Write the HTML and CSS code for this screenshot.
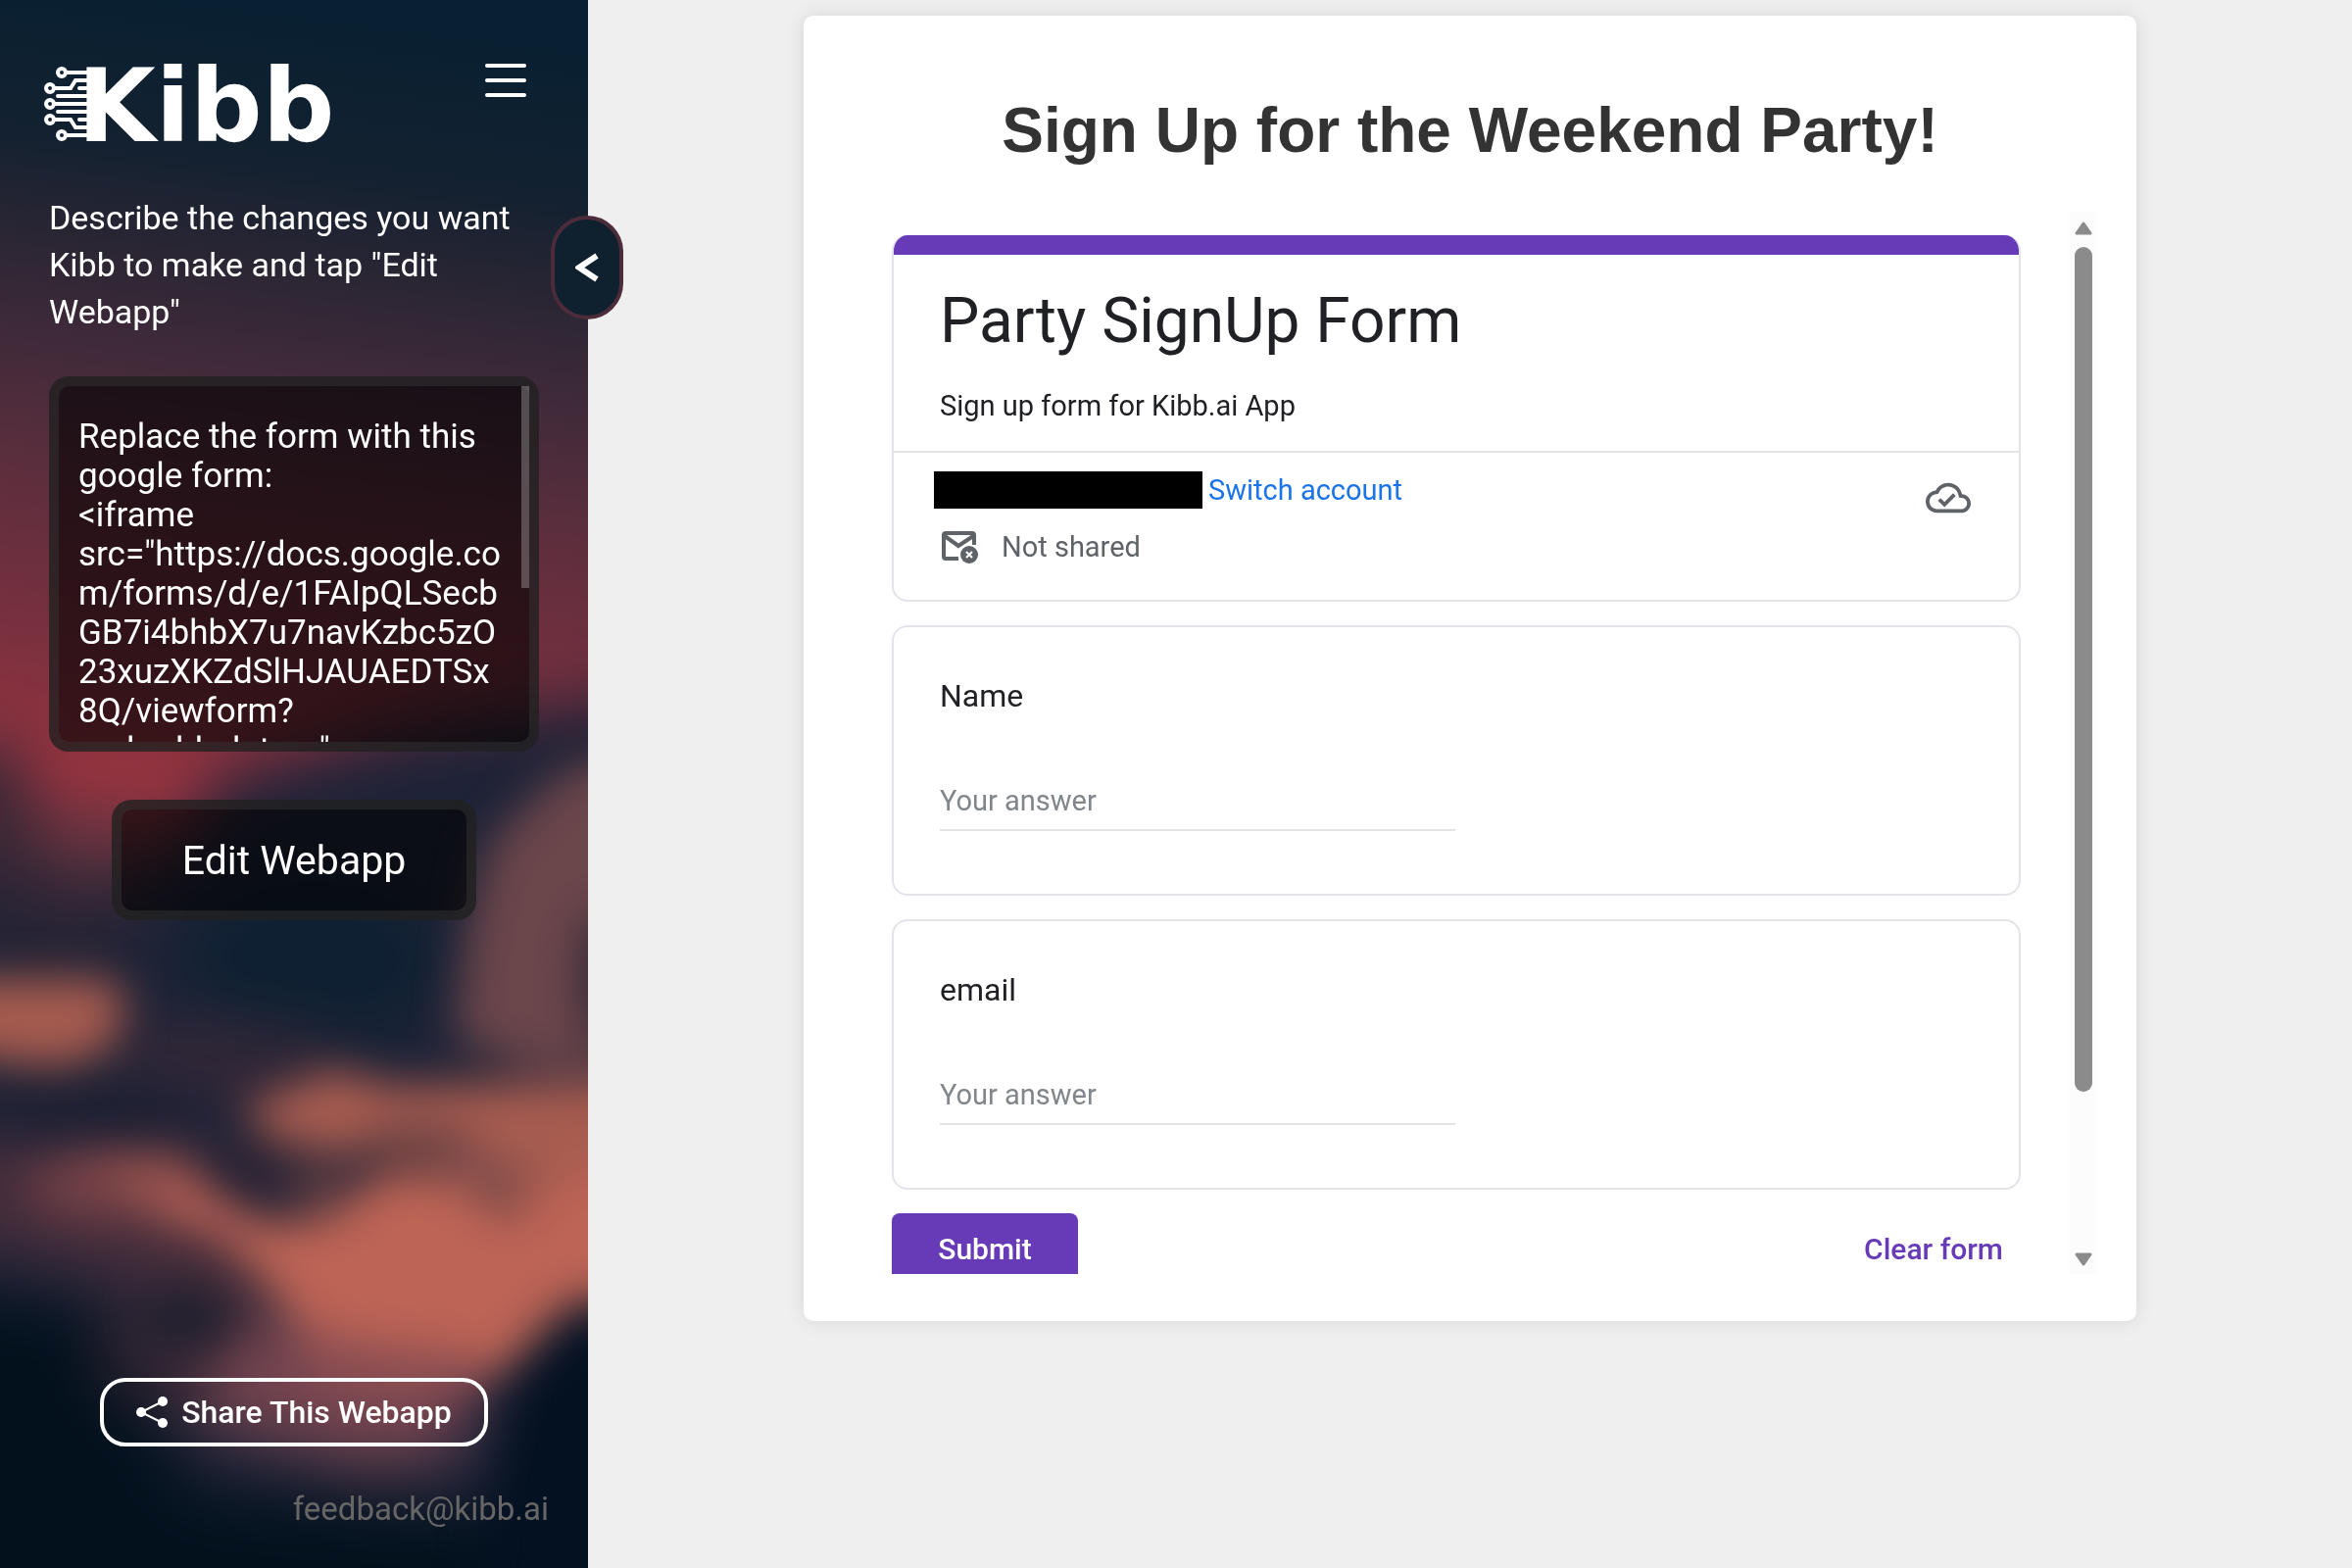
FILE: index.html
```html
<!DOCTYPE html>
<html lang="en">
<head>
    <meta charset="UTF-8">
    <meta name="viewport" content="width=device-width, initial-scale=1.0">
    <title>Kibb</title>
    <link rel="stylesheet" href="styles.css">
</head>
<body>
    <aside class="sidebar">
        <!-- Blurred sunset backdrop -->
        <svg class="backdrop" viewBox="0 0 600 1600" preserveAspectRatio="none" aria-hidden="true">
            <defs>
                <linearGradient id="sky" gradientUnits="userSpaceOnUse" x1="260" y1="0" x2="160" y2="800">
                    <stop offset="0" stop-color="#082032"/>
                    <stop offset="0.2" stop-color="#132130"/>
                    <stop offset="0.34" stop-color="#2c2634"/>
                    <stop offset="0.46" stop-color="#402a3a"/>
                    <stop offset="0.62" stop-color="#5c2e3d"/>
                    <stop offset="0.82" stop-color="#78303f"/>
                    <stop offset="1" stop-color="#983440"/>
                </linearGradient>
                <filter id="soft" x="-50%" y="-50%" width="200%" height="200%" color-interpolation-filters="sRGB">
                    <feGaussianBlur stdDeviation="22"/>
                </filter>
                <filter id="softer" x="-50%" y="-50%" width="200%" height="200%" color-interpolation-filters="sRGB">
                    <feGaussianBlur stdDeviation="32"/>
                </filter>
            </defs>
            <rect width="600" height="1600" fill="url(#sky)"/>
            <g filter="url(#softer)">
                <path d="M-120 860 L50 860 L90 900 L160 880 L230 790 L420 740 L720 700 L720 1720 L-120 1720Z" fill="#1e2337"/>
                <path d="M-120 750 L20 760 L60 900 L-120 900Z" fill="#3a2836"/>
                <ellipse cx="100" cy="860" rx="60" ry="40" fill="#63333f"/>
                <ellipse cx="60" cy="940" rx="90" ry="30" fill="#2b2433"/>
                <ellipse cx="320" cy="980" rx="130" ry="80" fill="#0e2032"/>
                <ellipse cx="230" cy="1080" rx="120" ry="30" fill="#3a2938"/>
                <path d="M-120 1160 L200 1170 L300 1300 L200 1330 L-120 1240Z" fill="#482e3c"/>
                <path d="M-120 1310 L90 1330 L140 1420 L200 1520 L720 1560 L720 1760 L-120 1760Z" fill="#03111d"/>
                <ellipse cx="200" cy="1380" rx="100" ry="60" fill="#342634"/>
                <path d="M230 1340 L500 1340 L470 1480 L380 1500 L200 1450Z" fill="#73444f"/>
            </g>
            <g filter="url(#soft)">
                <path d="M720 740 L570 790 L500 860 L475 960 L465 1060 L540 1090 L720 1090Z" fill="#6b464b"/>
                <path d="M720 900 L595 940 L590 1020 L610 1070 L720 1070Z" fill="#362a38"/>
                <path d="M-90 998 L110 998 L132 1024 L112 1072 L60 1090 L-90 1072Z" fill="#a65b4f"/>
                <ellipse cx="100" cy="1132" rx="110" ry="14" fill="#191d2e"/>
                <path d="M245 1130 L340 1090 L400 1108 L720 1100 L720 1250 L560 1250 L480 1200 L360 1180 L280 1165Z" fill="#a85c50"/>
                <path d="M90 1185 L180 1180 L215 1220 L270 1250 L340 1240 L390 1195 L470 1205 L520 1240 L720 1140 L720 1310 L580 1330 L510 1400 L320 1390 L280 1320 L220 1260 L150 1240Z" fill="#bd6455"/>
                <ellipse cx="110" cy="1210" rx="80" ry="34" fill="#84484a" opacity="0.7"/>
                <ellipse cx="425" cy="1168" rx="64" ry="20" fill="#5c3c3e" opacity="0.8"/>
                <ellipse cx="505" cy="1195" rx="40" ry="20" fill="#86504c" opacity="0.8"/>
                <ellipse cx="258" cy="1192" rx="40" ry="26" fill="#2c2434"/>
                <ellipse cx="325" cy="1212" rx="34" ry="20" fill="#6a4042" opacity="0.9"/>
                <ellipse cx="190" cy="1345" rx="50" ry="30" fill="#20202e"/>
                <path d="M300 1350 L380 1370 L480 1380 L490 1410 L420 1430 L310 1410Z" fill="#8c4e52"/>
                <path d="M720 1330 L590 1345 L530 1410 L505 1500 L480 1700 L720 1700Z" fill="#041121"/>
            </g>
        </svg>

        <div class="sidebar-top">
            <div class="logo">
                <svg class="circuit" viewBox="0 0 44 80" fill="none" stroke="#fff" stroke-width="4" aria-hidden="true">
                    <circle cx="18" cy="8" r="4"/>
                    <circle cx="6" cy="24" r="4"/>
                    <circle cx="6" cy="40" r="4"/>
                    <circle cx="6" cy="56" r="4"/>
                    <circle cx="18" cy="72" r="4"/>
                    <path d="M23 8H44M11 24H27L32 16H44M11 40H44M11 56H27L32 64H44M23 72H44"/>
                    <path d="M14 32H44M14 48H44M36 24H44M36 56H44" stroke-linecap="round"/>
                </svg>
                <span class="logo-text">Kibb</span>
            </div>
            <button class="menu-btn" aria-label="Menu">
                <span></span>
                <span></span>
                <span></span>
            </button>
        </div>

        <label class="hint" for="prompt">Describe the changes you want Kibb to make and tap "Edit Webapp"</label>

        <div class="prompt-box">
            <textarea id="prompt" class="prompt">Replace the form with this
google form:
&lt;iframe
src="https://docs.google.co
m/forms/d/e/1FAIpQLSecb
GB7i4bhbX7u7navKzbc5zO
23xuzXKZdSlHJAUAEDTSx
8Q/viewform?
embedded=true"
width="640"
height="550"
frameborder="0"
marginheight="0"
marginwidth="0"&gt;
&lt;/iframe&gt;</textarea>
            <span class="prompt-thumb"></span>
        </div>

        <button class="edit-btn">Edit Webapp</button>

        <div class="sidebar-bottom">
            <button class="share-btn">
                <svg viewBox="0 0 32 32" width="32" height="32" fill="#fff" aria-hidden="true">
                    <path d="M27 5L5 16L27 27" fill="none" stroke="#fff" stroke-width="2"/>
                    <circle cx="5" cy="16" r="5"/>
                    <circle cx="27" cy="5" r="5"/>
                    <circle cx="27" cy="27" r="5"/>
                </svg>
                Share This Webapp
            </button>
            <a class="feedback" href="mailto:feedback@kibb.ai">feedback@kibb.ai</a>
        </div>

        <button class="collapse-btn" aria-label="Collapse sidebar">
            <svg viewBox="0 0 24 30" width="24" height="30" fill="none" stroke="#fff" stroke-width="6" aria-hidden="true">
                <path d="M22 3L4 15L22 27"/>
            </svg>
        </button>
    </aside>

    <main class="content">
        <section class="card">
            <h1>Sign Up for the Weekend Party!</h1>
            <div class="form-frame">
                <form class="google-form">
                    <div class="form-head">
                        <div class="form-title">
                            <h2>Party SignUp Form</h2>
                            <p>Sign up form for Kibb.ai App</p>
                        </div>
                        <div class="account">
                            <div>
                                <div class="account-row">
                                    <span class="redacted"></span>
                                    <a href="#">Switch account</a>
                                </div>
                                <div class="shared-row">
                                    <svg viewBox="0 0 38 34" width="38" height="34" fill="none" stroke="#5f6368" stroke-width="4" aria-hidden="true">
                                        <path d="M18 29H5Q3 29 3 27V5Q3 3 5 3H32Q34 3 34 5V15M4 6L18 16L33 6"/>
                                        <circle cx="29" cy="25" r="9" fill="#5f6368" stroke="none"/>
                                        <path d="M26 22L32 28M32 22L26 28" stroke="#fff" stroke-width="2"/>
                                    </svg>
                                    Not shared
                                </div>
                            </div>
                            <svg class="cloud" viewBox="0 0 24 24" width="46" height="46" fill="#5f6368" aria-hidden="true">
                                <path d="M19.35 10.04C18.67 6.59 15.64 4 12 4 9.11 4 6.6 5.64 5.35 8.04 2.34 8.36 0 10.91 0 14c0 3.31 2.69 6 6 6h13c2.76 0 5-2.24 5-5 0-2.64-2.05-4.78-4.65-4.96zM19 18H6c-2.21 0-4-1.79-4-4 0-2.05 1.53-3.76 3.56-3.97l1.07-.11.5-.95C8.08 7.14 9.94 6 12 6c2.62 0 4.88 1.86 5.39 4.43l.3 1.5 1.53.11c1.56.1 2.78 1.41 2.78 2.96 0 1.65-1.35 3-3 3zm-9-3.82l-2.09-2.09L6.5 13.5 10 17l6.01-6.01-1.41-1.41z"/>
                            </svg>
                        </div>
                    </div>
                    <div class="question">
                        <label for="name">Name</label>
                        <input type="text" id="name" placeholder="Your answer">
                    </div>
                    <div class="question">
                        <label for="email">email</label>
                        <input type="text" id="email" placeholder="Your answer">
                    </div>
                    <div class="form-actions">
                        <button type="submit" class="submit-btn">Submit</button>
                        <button type="reset" class="clear-btn">Clear form</button>
                    </div>
                </form>
                <div class="scrollbar" aria-hidden="true">
                    <svg viewBox="0 0 18 14" width="18" height="14"><path d="M9 2L16 12H2Z" fill="#8b8b8b" stroke="#8b8b8b" stroke-width="3" stroke-linejoin="round"/></svg>
                    <div class="thumb-area"><div class="thumb"></div></div>
                    <svg viewBox="0 0 18 14" width="18" height="14"><path d="M9 12L16 2H2Z" fill="#8b8b8b" stroke="#8b8b8b" stroke-width="3" stroke-linejoin="round"/></svg>
                </div>
            </div>
        </section>
    </main>
</body>
</html>
```
FILE: styles.css
```css
* {
    box-sizing: border-box;
}

body {
    margin: 0;
    min-height: 100vh;
    display: flex;
    background-color: #efefef;
    font-family: Roboto, sans-serif;
}

button {
    font-family: inherit;
    cursor: pointer;
}

/* Sidebar */
.sidebar {
    position: relative;
    width: 25%;
    min-height: 100vh;
    padding: 60px 50px 36px;
    display: flex;
    flex-direction: column;
    color: white;
}

.backdrop {
    position: absolute;
    top: 0;
    left: 0;
    width: 100%;
    height: 100%;
    z-index: -1;
}

.sidebar-top {
    display: flex;
    justify-content: space-between;
    align-items: flex-start;
    height: 90px;
    margin-bottom: 48px;
}

.logo {
    display: flex;
    align-items: center;
    height: 92px;
    margin-left: -5px;
}

.circuit {
    width: 44px;
    height: 80px;
    margin-right: -10px;
}

.logo-text {
    padding-top: 4px;
    font-family: "DejaVu Sans", sans-serif;
    font-weight: bold;
    font-size: 103px;
    line-height: 90px;
}

.menu-btn {
    display: flex;
    flex-direction: column;
    gap: 11px;
    margin-right: 13px;
    padding: 5px 0;
    background: none;
    border: none;
}

.menu-btn span {
    width: 42px;
    height: 4px;
    border-radius: 2px;
    background-color: white;
}

.hint {
    font-size: 34px;
    line-height: 48px;
    margin-bottom: 42px;
}

.prompt-box {
    position: relative;
    height: 383px;
}

.prompt {
    display: block;
    width: 100%;
    height: 100%;
    padding: 32px 10px 32px 20px;
    border: 10px solid rgba(32, 32, 32, 0.8);
    border-radius: 20px;
    background-color: rgba(0, 0, 0, 0.6);
    background-clip: padding-box;
    color: white;
    font-family: inherit;
    font-size: 35px;
    line-height: 40px;
    white-space: pre;
    resize: none;
    outline: none;
    scrollbar-width: none;
}

.prompt-thumb {
    position: absolute;
    top: 10px;
    right: 10px;
    width: 8px;
    height: 206px;
    background-color: rgba(255, 255, 255, 0.25);
}

.edit-btn {
    align-self: center;
    margin-top: 49px;
    width: 372px;
    height: 123px;
    border: 10px solid rgba(32, 32, 32, 0.8);
    border-radius: 20px;
    background-color: rgba(0, 0, 0, 0.6);
    background-clip: padding-box;
    color: white;
    font-size: 41px;
}

.sidebar-bottom {
    margin-top: auto;
    display: flex;
    flex-direction: column;
    align-items: center;
    gap: 40px;
}

.share-btn {
    display: flex;
    align-items: center;
    justify-content: center;
    gap: 14px;
    width: 396px;
    height: 70px;
    border: 4px solid white;
    border-radius: 26px;
    background: none;
    color: white;
    font-size: 32px;
    font-weight: 500;
}

.feedback {
    align-self: flex-end;
    margin-right: -10px;
    color: #666;
    font-size: 33px;
    line-height: 48px;
    text-decoration: none;
}

.collapse-btn {
    position: absolute;
    top: 220px;
    right: -36px;
    width: 74px;
    height: 106px;
    display: flex;
    align-items: center;
    justify-content: center;
    border: 4px solid #4c2c3b;
    border-radius: 37px;
    background-color: #0f212f;
}

/* Generated webapp */
.content {
    flex: 1;
    padding: 16px 20px;
}

.card {
    max-width: 1360px;
    margin: 0 auto;
    padding: 80px 40px 48px;
    background-color: white;
    border-radius: 10px;
    box-shadow: 0 0 20px rgba(0, 0, 0, 0.1);
}

.card h1 {
    margin: 0 0 46px;
    color: #333;
    font-family: Arial, "Liberation Sans", sans-serif;
    font-size: 64px;
    line-height: 74px;
    text-align: center;
}

.form-frame {
    display: flex;
    justify-content: space-between;
    height: 1084px;
    overflow: hidden;
}

.google-form {
    flex: 1;
    padding: 24px 49px 0 50px;
    display: flex;
    flex-direction: column;
    gap: 24px;
    color: #202124;
}

.form-head,
.question {
    flex-shrink: 0;
    border: 2px solid #e3e3ea;
    border-radius: 16px;
}

.form-head {
    height: 374px;
    border-top: none;
    overflow: hidden;
}

.form-title {
    height: 222px;
    padding: 30px 47px 0;
    border-top: 20px solid #673ab7;
    border-bottom: 2px solid #e3e3e7;
}

.form-title h2 {
    margin: 0 0 28px;
    font-size: 64px;
    font-weight: 400;
    line-height: 76px;
}

.form-title p {
    margin: 0;
    font-size: 29px;
    line-height: 40px;
}

.account {
    display: flex;
    justify-content: space-between;
    padding: 19px 49px 0 41px;
}

.account-row {
    display: flex;
    align-items: center;
    gap: 6px;
    height: 38px;
}

.redacted {
    width: 274px;
    height: 38px;
    background-color: black;
}

.account-row a {
    color: #1a73e8;
    font-size: 29px;
    line-height: 40px;
    text-decoration: none;
}

.shared-row {
    display: flex;
    align-items: center;
    gap: 24px;
    margin-top: 19px;
    padding-left: 7px;
    color: #5f6368;
    font-size: 29px;
    line-height: 40px;
}

.cloud {
    margin-top: 4px;
}

.question {
    height: 276px;
    padding: 50px 47px;
}

.question label {
    display: block;
    font-size: 32px;
    line-height: 40px;
}

.question input {
    display: block;
    width: 526px;
    height: 54px;
    margin-top: 64px;
    padding: 0 0 6px;
    border: none;
    border-bottom: 2px solid #e3e3e5;
    outline: none;
    background: none;
    font-family: inherit;
    font-size: 29px;
}

.question input::placeholder {
    color: #80868b;
}

.form-actions {
    display: flex;
    justify-content: space-between;
    align-items: flex-start;
}

.submit-btn,
.clear-btn {
    height: 72px;
    border: none;
    border-radius: 8px;
    font-size: 30px;
    font-weight: 500;
}

.submit-btn {
    width: 190px;
    background-color: #673ab7;
    color: white;
}

.clear-btn {
    padding: 0 18px;
    background: none;
    color: #673ab7;
}

.scrollbar {
    display: flex;
    flex-direction: column;
    align-items: center;
    width: 29px;
    padding: 10px 0 8px;
    background-color: #fcfcfc;
}

.thumb-area {
    flex: 1;
    padding: 12px 0;
}

.thumb {
    width: 18px;
    height: 85%;
    border-radius: 9px;
    background-color: #8b8b8b;
}
```
